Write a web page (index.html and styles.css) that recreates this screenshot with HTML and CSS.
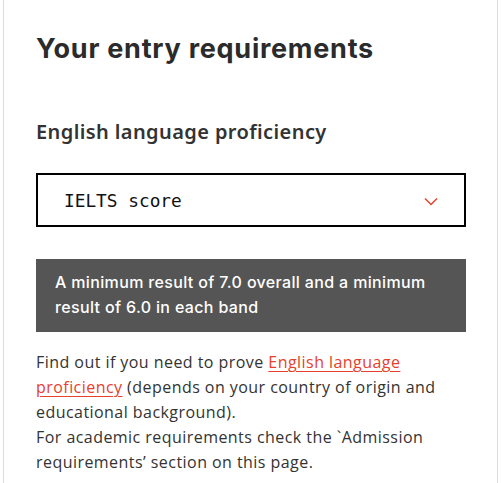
FILE: index.html
```html
<!DOCTYPE html>
<html lang="en">
<head>
<meta charset="utf-8">
<title>Your entry requirements</title>
<link rel="stylesheet" href="styles.css">
</head>
<body>
<section class="card">
  <h2 class="title">Your entry requirements</h2>
  <h3 class="subtitle">English language proficiency</h3>
  <div class="select">
    <span class="select-value">IELTS score</span>
    <svg class="chevron" width="14" height="9" viewBox="0 0 14 9" aria-hidden="true">
      <path d="M1 1.5 L7 7.5 L13 1.5" fill="none" stroke="#e5412d" stroke-width="1.5"/>
    </svg>
  </div>
  <div class="result">A minimum result of 7.0 overall and a minimum result of 6.0 in each band</div>
  <p class="info">Find out if you need to prove <a href="#">English language proficiency</a> (depends on your country of origin and educational background).<br>For academic requirements check the `Admission requirements’ section on this page.</p>
</section>
</body>
</html>
```
FILE: styles.css
```css
html, body {
  margin: 0;
  padding: 0;
  background: #fff;
}
.card {
  margin-left: 3px;
  width: 495px;
  min-height: 483px;
  box-sizing: border-box;
  border-left: 1px solid #dcdcdc;
  border-right: 1px solid #dcdcdc;
  padding: 31px 31px 0 32px;
  color: #333;
}
.title {
  margin: 0;
  font-family: "Inter", sans-serif;
  font-weight: 700;
  font-size: 27px;
  line-height: 36px;
  letter-spacing: 0.75px;
  color: #2b2b2b;
}
.subtitle {
  margin: 52px 0 0;
  font-family: "Noto Sans", sans-serif;
  font-weight: 600;
  font-size: 20px;
  line-height: 26px;
  letter-spacing: 0.4px;
  color: #333;
}
.select {
  margin-top: 28px;
  height: 54px;
  box-sizing: border-box;
  border: 2px solid #000;
  display: flex;
  align-items: center;
  justify-content: space-between;
  padding: 0 26px 0 26px;
}
.select-value {
  font-family: "DejaVu Sans Mono", monospace;
  font-size: 17.8px;
  color: #111;
}
.chevron {
  display: block;
  margin-top: 2px;
}
.result {
  margin-top: 32px;
  background: #555;
  color: #fff;
  font-family: "Inter", sans-serif;
  font-weight: 500;
  font-size: 16px;
  line-height: 25px;
  letter-spacing: 0.35px;
  padding: 11px 19px 12px;
}
.info {
  margin: 18px 0 0;
  font-family: "Open Sans", sans-serif;
  font-size: 16px;
  line-height: 25px;
  letter-spacing: 0.45px;
  color: #333;
}
.info a {
  color: #e5412d;
  text-decoration: underline;
  text-underline-offset: 3px;
}
```
